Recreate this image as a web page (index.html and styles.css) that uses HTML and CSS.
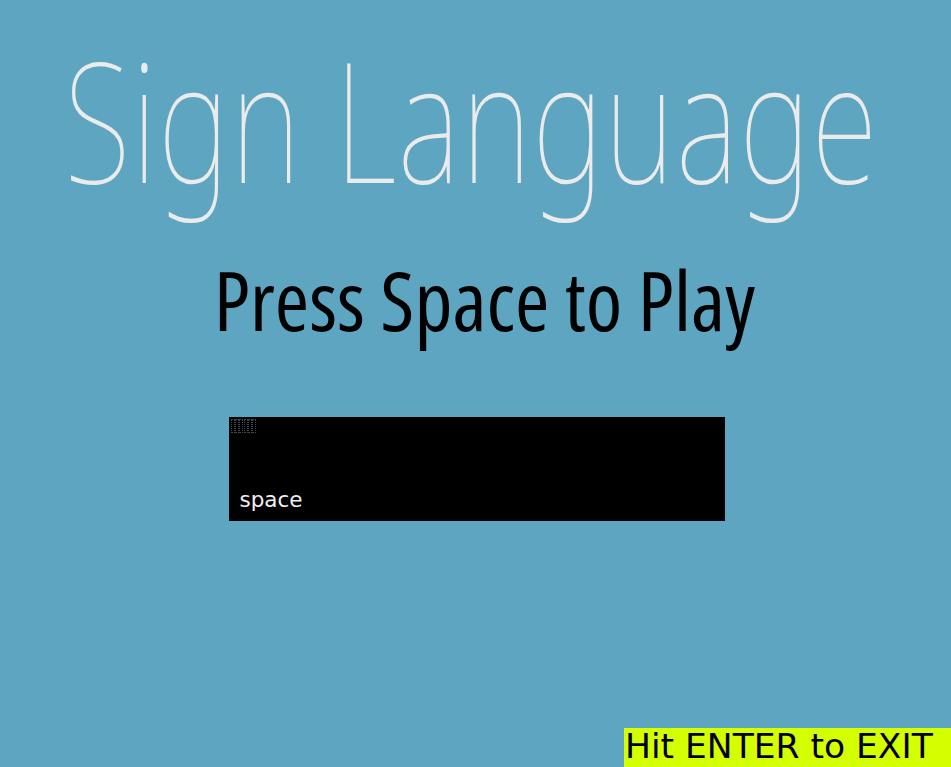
FILE: index.html
```html
<!DOCTYPE html>
<html>
<head>
<meta charset="utf-8">
<link rel="stylesheet" href="styles.css">
</head>
<body>
<main class="screen">
  <h1 class="title">Sign Language</h1>
  <p class="prompt">Press Space to Play</p>
  <div class="keybox">
    <div class="tofu"><span></span><span></span><span></span><span></span><span></span><span></span></div>
    <div class="keyname">space</div>
  </div>
  <div class="exit">Hit ENTER to EXIT</div>
</main>
</body>
</html>
```
FILE: styles.css
```css
html, body {
  margin: 0;
  padding: 0;
  width: 951px;
  height: 767px;
  overflow: hidden;
  background: #5ea5c2;
}
.screen {
  width: 951px;
  height: 767px;
  display: flex;
  flex-direction: column;
  align-items: center;
}
.title {
  margin: 18px 7px 0 0;
  font-family: "Noto Sans", sans-serif;
  font-weight: 100;
  font-size: 167px;
  letter-spacing: 2px;
  line-height: 200px;
  color: #ebebeb;
  white-space: nowrap;
  transform: scaleX(0.728);
}
.prompt {
  margin: 31px 0 0 18px;
  font-family: "Open Sans", sans-serif;
  font-weight: 400;
  font-stretch: 75%;
  font-size: 83px;
  line-height: 100px;
  color: #000;
  white-space: nowrap;
}
.keybox {
  margin: 68px 0 0 2px;
  width: 496px;
  height: 104px;
  background: #000;
  display: flex;
  flex-direction: column;
  justify-content: space-between;
  box-sizing: border-box;
  padding: 2px 0 9px 2px;
}
.tofu {
  display: flex;
  gap: 0.4px;
}
.tofu span {
  width: 2px;
  height: 12px;
  border: 1px dotted #3a4a50;
}
.keyname {
  margin-left: 9px;
  font-family: "DejaVu Sans", sans-serif;
  font-size: 21.5px;
  line-height: 24px;
  color: #f0f0f0;
}
.exit {
  margin-top: auto;
  align-self: flex-end;
  width: 327px;
  height: 39px;
  background: #d4ff00;
  font-family: "DejaVu Sans", sans-serif;
  font-size: 34.5px;
  line-height: 36px;
  color: #000;
  padding-left: 1px;
  box-sizing: border-box;
  white-space: nowrap;
}
```
